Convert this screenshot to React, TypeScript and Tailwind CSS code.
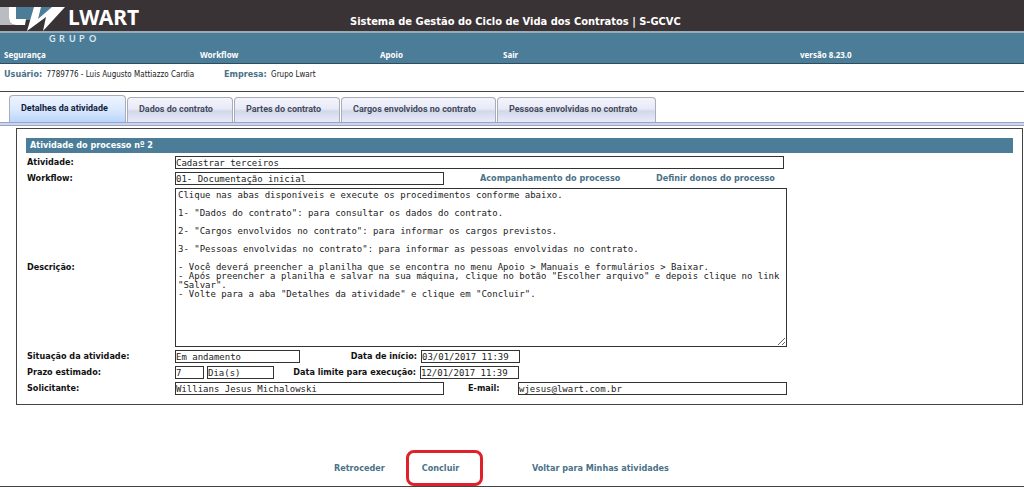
import type { ReactNode } from 'react';

const tabs = [
  { label: 'Detalhes da atividade', width: 'w-[117px]' },
  { label: 'Dados do contrato', width: 'w-[106px]' },
  { label: 'Partes do contrato', width: 'w-[106px]' },
  { label: 'Cargos envolvidos no contrato', width: 'w-[155px]' },
  { label: 'Pessoas envolvidas no contrato', width: 'w-[159px]' },
];

const menu = [
  { label: 'Segurança', width: 'w-[196px]' },
  { label: 'Workflow', width: 'w-[180px]' },
  { label: 'Apoio', width: 'w-[123px]' },
  { label: 'Sair', width: 'w-[297px]' },
];

const descricao = `Clique nas abas disponíveis e execute os procedimentos conforme abaixo.

1- "Dados do contrato": para consultar os dados do contrato.

2- "Cargos envolvidos no contrato": para informar os cargos previstos.

3- "Pessoas envolvidas no contrato": para informar as pessoas envolvidas no contrato.

- Você deverá preencher a planilha que se encontra no menu Apoio > Manuais e formulários > Baixar.
- Após preencher a planilha e salvar na sua máquina, clique no botão "Escolher arquivo" e depois clique no link "Salvar".
- Volte para a aba "Detalhes da atividade" e clique em "Concluir".`;

const fieldClass =
  "block h-[13px] border border-[#333] bg-white font-['DejaVu_Sans_Mono',monospace] text-[9px] leading-[11px] text-[#222]";
const labelClass = 'font-bold text-[9px] leading-[13px] text-[#111]';
const linkClass = 'font-bold text-[9px] leading-[13px] text-[#4a7288]';

function Logo() {
  return (
    <svg width="142" height="44" viewBox="0 0 142 44" role="img" aria-label="Lwart Grupo">
      <path d="M0 7H9V18Q9 25 16 25H0Z" fill="#b9bcc0" />
      <path d="M16 7H53L42 20H16Z" fill="#4b7d98" />
      <path d="M9 7H16V19H26L25 25H16Q9 25 9 18Z" fill="#fff" />
      <path d="M34 7H41L38 19L52 7H65L43 31L46 17L27 31Z" fill="#fff" />
      <text x="68" y="25" fontSize="21" fontWeight="700" fill="#fff" className="font-['Noto_Sans',sans-serif]">
        LWART
      </text>
      <text x="49 59 69 79 89" y="42" fontSize="9" fontWeight="700" fill="#dce8ee" className="font-['Lato',sans-serif]">
        GRUPO
      </text>
    </svg>
  );
}

function Row({ label, id, children }: { label: string; id: string; children: ReactNode }) {
  return (
    <div className="flex items-center">
      <label htmlFor={id} className={`${labelClass} w-[148px] shrink-0`}>
        {label}
      </label>
      {children}
    </div>
  );
}

export default function App() {
  return (
    <div className="overflow-hidden bg-white font-['DejaVu_Sans_Condensed','DejaVu_Sans',sans-serif]">
      <header className="bg-[linear-gradient(#3a3335_31px,#9aabb5_31px,#9aabb5_33px,#4b7d98_33px)] border-b border-[#2d4d5e]">
        <div className="flex h-11">
          <Logo />
          <h1 className="ml-[208px] mt-[14px] text-[11px] leading-4 font-bold whitespace-nowrap text-white">
            Sistema de Gestão do Ciclo de Vida dos Contratos | S-GCVC
          </h1>
        </div>
        <nav className="flex pt-[5px] pb-0.5 pl-1 font-['Noto_Sans',sans-serif] text-[8px] leading-3 font-bold text-white">
          {menu.map((item) => (
            <div key={item.label} className={item.width}>
              <a href="#">{item.label}</a>
            </div>
          ))}
          <span>versão 8.23.0</span>
        </nav>
      </header>

      <div className="flex h-7 border-b border-[#444] pt-1 pl-1 text-[8px] leading-3 text-[#222]">
        <p className="w-[220px]">
          <span className="mr-0.5 text-[9px] font-bold text-[#4a7288]">Usuário:</span> 7789776 - Luis Augusto Mattiazzo
          Cardia
        </p>
        <p>
          <span className="mr-0.5 text-[9px] font-bold text-[#4a7288]">Empresa:</span> Grupo Lwart
        </p>
      </div>

      <div role="tablist" className="flex h-[31px] items-end gap-px border-b border-[#9aa4c4] pl-[9px]">
        {tabs.map((tab, i) => (
          <button
            key={tab.label}
            type="button"
            role="tab"
            aria-selected={i === 0}
            className={`${tab.width} shrink-0 rounded-t border border-b-0 border-[#a9adba] pl-[11px] text-left font-['Roboto',sans-serif] text-[9px] font-bold whitespace-nowrap ${
              i === 0
                ? 'h-[27px] bg-linear-to-b from-[#edf4ff] via-[#dce9fd] to-[#b9d6fb] text-[#111c38]'
                : 'h-[25px] bg-[linear-gradient(#f3f4fb,#e8eaf7_45%,#d2d7ec_55%,#e8ebf8)] text-[#444a5c]'
            }`}
          >
            {tab.label}
          </button>
        ))}
      </div>
      <div className="h-[3px] border-b border-[#9aa4c4] bg-[#ccd4ee]" />

      <main>
        <form className="mt-0.5 mr-px ml-4 border border-[#444] px-[9px] pt-[9px] pb-[9px]">
          <h2 className="mb-[3px] bg-[#4b7d98] pl-1 text-[9px] leading-[15px] font-bold text-white">
            Atividade do processo nº 2
          </h2>
          <div className="flex flex-col gap-[3px] pl-px">
            <Row label="Atividade:" id="atividade">
              <input id="atividade" readOnly defaultValue="Cadastrar terceiros" className={`${fieldClass} w-[609px]`} />
            </Row>
            <Row label="Workflow:" id="workflow">
              <input id="workflow" readOnly defaultValue="01- Documentação inicial" className={`${fieldClass} w-[269px]`} />
              <a href="#" className={`${linkClass} ml-9 w-[176px]`}>
                Acompanhamento do processo
              </a>
              <a href="#" className={linkClass}>
                Definir donos do processo
              </a>
            </Row>
            <Row label="Descrição:" id="descricao">
              <textarea
                id="descricao"
                readOnly
                defaultValue={descricao}
                className="block h-[159px] w-[612px] border border-[#333] p-0.5 font-['DejaVu_Sans_Mono',monospace] text-[9px] leading-[9px] text-[#222]"
              />
            </Row>
            <Row label="Situação da atividade:" id="situacao">
              <input id="situacao" readOnly defaultValue="Em andamento" className={`${fieldClass} w-[125px]`} />
              <label htmlFor="inicio" className={`${labelClass} w-[117px] text-right`}>
                Data de início:
              </label>
              <input id="inicio" readOnly defaultValue="03/01/2017 11:39" className={`${fieldClass} ml-1 w-[99px]`} />
            </Row>
            <Row label="Prazo estimado:" id="prazo">
              <input id="prazo" readOnly defaultValue="7" className={`${fieldClass} w-[29px]`} />
              <input aria-label="Unidade do prazo" readOnly defaultValue="Dia(s)" className={`${fieldClass} ml-[3px] w-[67px]`} />
              <label htmlFor="limite" className={`${labelClass} w-[142px] text-right`}>
                Data limite para execução:
              </label>
              <input id="limite" readOnly defaultValue="12/01/2017 11:39" className={`${fieldClass} ml-1 w-[99px]`} />
            </Row>
            <Row label="Solicitante:" id="solicitante">
              <input id="solicitante" readOnly defaultValue="Willians Jesus Michalowski" className={`${fieldClass} w-[269px]`} />
              <label htmlFor="email" className={`${labelClass} ml-6 w-[50px]`}>
                E-mail:
              </label>
              <input id="email" type="email" readOnly defaultValue="wjesus@lwart.com.br" className={`${fieldClass} w-[269px]`} />
            </Row>
          </div>
        </form>

        <div className="mt-[45px] flex items-center pl-[334px]">
          <button type="button" className={`${linkClass} w-[72px] text-left`}>
            Retroceder
          </button>
          <button
            type="button"
            className={`${linkClass} h-9 w-[77px] rounded-lg border-3 border-[#e0202a] pr-2 text-center`}
          >
            Concluir
          </button>
          <a href="#" className={`${linkClass} ml-[49px]`}>
            Voltar para Minhas atividades
          </a>
        </div>
      </main>
      <footer className="border-t border-[#444]" />
    </div>
  );
}
